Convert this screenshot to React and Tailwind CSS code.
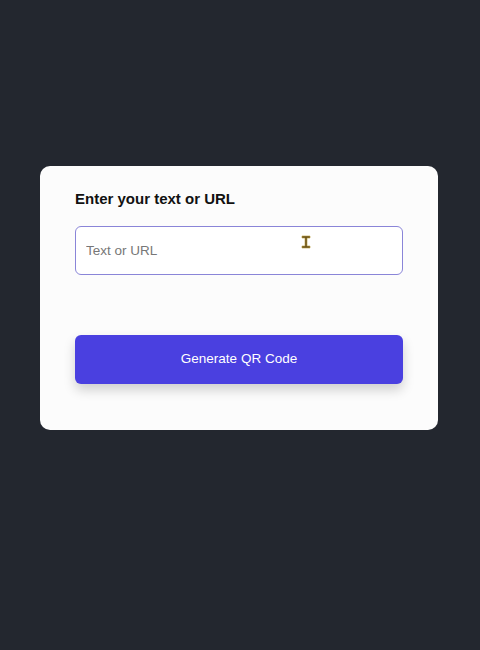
const App = () => {
  return (
    <div className="min-h-[650px] w-full bg-[#23272f] pt-[166px] pl-10 font-['Liberation_Sans',Arial,sans-serif]">

      {/* Card */}
      <div className="relative w-[398px] rounded-[10px] bg-[#fcfcfc] px-[35px] pt-[21px] pb-[46px]">

        <h2 className="text-[15px] leading-[23px] font-bold text-[#111]">
          Enter your text or URL
        </h2>

        <input
          type="text"
          placeholder="Text or URL"
          className="mt-4 block h-[49px] w-full rounded-[6px] border border-[#8a85d8] bg-white px-[10px] text-[13.5px] text-[#222] placeholder:text-[#777] outline-none"
        />

        <button className="mt-[60px] block h-[49px] w-full rounded-[6px] bg-[#4a40e0] text-[13.5px] text-white shadow-[0_6px_12px_rgba(0,0,0,0.18)]">
          Generate QR Code
        </button>

        {/* mouse cursor */}
        <svg className="absolute left-[261px] top-[69px]" width="10" height="14" viewBox="0 0 10 14">
          <path d="M1 1h8v2H6v8h3v2H1v-2h3V3H1z" fill="#6b5520" stroke="#b99a3a" strokeWidth="0.6" />
        </svg>
      </div>
    </div>
  );
};

export default App;
